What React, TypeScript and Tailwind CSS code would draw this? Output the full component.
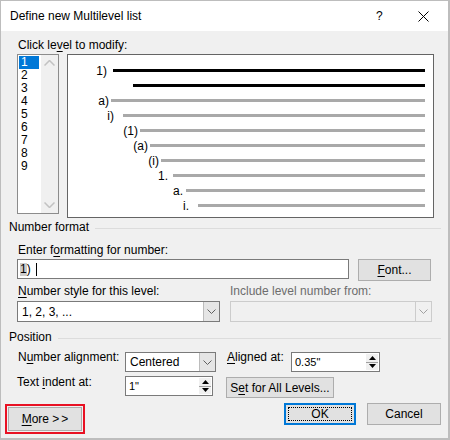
import React from 'react'

const previewRows = [
  { label: '1)', end: 107, line: 113, black: true },
  { label: '', end: 133, line: 133, black: true },
  { label: 'a)', end: 109, line: 111, black: false },
  { label: 'i)', end: 114, line: 123, black: false },
  { label: '(1)', end: 138, line: 140, black: false },
  { label: '(a)', end: 148, line: 150, black: false },
  { label: '(i)', end: 159, line: 161, black: false },
  { label: '1.', end: 168, line: 173, black: false },
  { label: 'a.', end: 183, line: 186, black: false },
  { label: 'i.', end: 189, line: 198, black: false },
]

const Chevron = ({ color = '#606060' }: { color?: string }) => (
  <svg width="9" height="5" viewBox="0 0 9 5">
    <path d="M0.5 0.5 L4.5 4.5 L8.5 0.5" stroke={color} strokeWidth="1" fill="none" />
  </svg>
)

const ChevronUp = () => (
  <svg width="11" height="6" viewBox="0 0 11 6">
    <path d="M0.5 5.5 L5.5 0.5 L10.5 5.5" stroke="#c2c2c2" strokeWidth="1.5" fill="none" />
  </svg>
)

const ChevronDown = () => (
  <svg width="11" height="6" viewBox="0 0 11 6">
    <path d="M0.5 0.5 L5.5 5.5 L10.5 0.5" stroke="#c2c2c2" strokeWidth="1.5" fill="none" />
  </svg>
)

const Combo = ({ value, width, disabled }: { value: string; width: string; disabled?: boolean }) => (
  <div
    className={
      'flex h-full border ' +
      width +
      (disabled ? ' border-[#cccccc] bg-[#f0f0f0]' : ' border-[#7a7a7a] bg-white')
    }
  >
    <div className="flex-1 flex items-center pl-[4px] text-[12px] leading-none">{value}</div>
    <div
      className={
        'w-[16px] flex items-center justify-center border-l ' +
        (disabled ? 'border-[#cccccc] bg-[#f0f0f0]' : 'border-[#bcbcbc] bg-[#e5e5e5]')
      }
    >
      <Chevron color={disabled ? '#a0a0a0' : '#606060'} />
    </div>
  </div>
)

const Spin = ({ value, width }: { value: string; width: string }) => (
  <div className={'flex h-[20px] border border-[#7a7a7a] bg-white ' + width}>
    <div className="flex-1 flex items-center pl-[3px] text-[11px] leading-none">{value}</div>
    <div className="w-[14px] flex flex-col p-[1px]">
      <div className="flex-1 flex items-center justify-center bg-[#f0f0f0] border-b border-[#a0a0a0]">
        <svg width="7" height="4" viewBox="0 0 7 4">
          <path d="M0 4 L3.5 0 L7 4Z" fill="#000" />
        </svg>
      </div>
      <div className="flex-1 flex items-center justify-center bg-[#f0f0f0]">
        <svg width="7" height="4" viewBox="0 0 7 4">
          <path d="M0 0 L3.5 4 L7 0Z" fill="#000" />
        </svg>
      </div>
    </div>
  </div>
)

const Button = ({ children, className }: { children: React.ReactNode; className: string }) => (
  <div
    className={
      'flex items-center justify-center bg-[#e1e1e1] border border-[#adadad] text-[12px] leading-none ' +
      className
    }
  >
    {children}
  </div>
)

export default function App() {
  return (
    <div className="w-[450px] h-[440px] box-border border border-r-2 border-b-2 border-[#bdbdbd] bg-[#f0f0f0] flex flex-col font-['Liberation_Sans',Arial,sans-serif] text-[12px] text-black overflow-hidden">
      {/* Title bar */}
      <div className="h-[30px] bg-white flex items-center pl-[9px]">
        <span className="flex-1 text-[12px]">Define new Multilevel list</span>
        <span className="text-[12px] w-[10px] mr-[32px]">?</span>
        <svg width="11" height="11" viewBox="0 0 11 11" className="mr-[19px]">
          <path d="M0.5 0.5 L10.5 10.5 M10.5 0.5 L0.5 10.5" stroke="#000" strokeWidth="1" />
        </svg>
      </div>

      {/* Level picker */}
      <div className="mt-[7px] ml-[17px] leading-[15px]">
        Click le<u className="underline-offset-2">v</u>el to modify:
      </div>
      <div className="mt-[1px] ml-[16px] flex items-start">
        <div className="w-[42px] h-[160px] border border-[#8c8c8c] bg-white flex">
          <div className="flex-1 pt-[1px] pl-[1px]">
            {['1', '2', '3', '4', '5', '6', '7', '8', '9'].map((n, i) => (
              <div
                key={n}
                className={
                  'h-[13px] leading-[13px] pl-[2px] w-[20px] ' + (i === 0 ? 'bg-[#0078d7] text-white' : '')
                }
              >
                {n}
              </div>
            ))}
          </div>
          <div className="w-[17px] bg-[#f0f0f0] flex flex-col items-center justify-between py-[5px]">
            <ChevronUp />
            <ChevronDown />
          </div>
        </div>
        <div className="ml-[8px] w-[367px] h-[164px] border border-[#646464] bg-white pt-[8px] pr-[8px]">
          {previewRows.map((r, i) => (
            <div key={i} className="h-[15px] flex items-center">
              <div
                className="flex justify-end text-[12px] leading-none"
                style={{ width: r.line - 68, paddingRight: r.line - r.end }}
              >
                {r.label}
              </div>
              <div className={'flex-1 h-[3px] ' + (r.black ? 'bg-black' : 'bg-[#a9a9a9]')} />
            </div>
          ))}
        </div>
      </div>

      {/* Number format group */}
      <div className="mt-[2px] ml-[8px] mr-[7px] flex items-center leading-[15px]">
        <span>Number format</span>
        <div className="flex-1 h-px bg-[#dcdcdc] ml-[6px] mt-[2px]" />
      </div>
      <div className="mt-[8px] ml-[17px] leading-[15px]">
        Enter f<u className="underline-offset-2">o</u>rmatting for number:
      </div>
      <div className="mt-[1px] ml-[16px] flex items-start">
        <div className="w-[332px] h-[20px] border border-[#7a7a7a] bg-white flex items-center pl-[2px]">
          <span className="bg-[#cccccc] leading-[13px]">1</span>
          <span className="leading-[13px]">)</span>
          <span className="ml-[5px] w-px h-[13px] bg-black" />
        </div>
        <Button className="ml-[9px] w-[73px] h-[22px]">
          <u className="underline-offset-2">F</u>ont...
        </Button>
      </div>
      <div className="mt-[3px] ml-[16px] flex items-start">
        <div className="w-[213px] flex flex-col">
          <div className="pl-[1px] leading-[15px]">
            <u className="underline-offset-2">N</u>umber style for this level:
          </div>
          <div className="mt-[2px] h-[21px]">
            <Combo value="1, 2, 3, ..." width="w-[203px]" />
          </div>
        </div>
        <div className="flex flex-col">
          <div className="leading-[15px] text-[#6d6d6d]">Include level number from:</div>
          <div className="mt-[2px] h-[21px]">
            <Combo value="" width="w-[202px]" disabled />
          </div>
        </div>
      </div>

      {/* Position group */}
      <div className="mt-[8px] ml-[8px] mr-[7px] flex items-center leading-[15px]">
        <span>Position</span>
        <div className="flex-1 h-px bg-[#dcdcdc] ml-[6px] mt-[2px]" />
      </div>
      <div className="mt-[5px] ml-[17px] flex items-start">
        <div className="w-[107px] leading-[15px]">
          N<u className="underline-offset-2">u</u>mber alignment:
        </div>
        <div className="mt-[2px] h-[20px]">
          <Combo value="Centered" width="w-[91px]" />
        </div>
        <div className="ml-[11px] w-[64px] leading-[15px]">
          <u className="underline-offset-2">A</u>ligned at:
        </div>
        <div className="mt-[2px]">
          <Spin value={'0.35"'} width="w-[89px]" />
        </div>
      </div>
      <div className="mt-[3px] ml-[16px] flex items-start">
        <div className="w-[108px] leading-[15px]">
          Text <u className="underline-offset-2">i</u>ndent at:
        </div>
        <div className="mt-[1px]">
          <Spin value={'1"'} width="w-[88px]" />
        </div>
        <Button className="mt-[2px] ml-[13px] w-[108px] h-[21px]">
          S<u className="underline-offset-2">e</u>t for All Levels...
        </Button>
      </div>

      {/* Bottom buttons */}
      <div className="mt-[5px] ml-[4px] flex items-start">
        <div className="mt-[1px] w-[80px] h-[30px] border-2 border-[#e81123] p-px">
          <Button className="w-full h-full">
            <u className="underline-offset-2">M</u>ore &gt;<span className="ml-[2px]">&gt;</span>
          </Button>
        </div>
        <div className="ml-[199px] w-[72px] h-[22px] border-2 border-[#0078d7] bg-[#e1e1e1] p-[2px]">
          <div className="w-full h-full border border-dotted border-black flex items-center justify-center leading-none">
            OK
          </div>
        </div>
        <Button className="ml-[11px] w-[74px] h-[22px]">Cancel</Button>
      </div>
    </div>
  )
}
